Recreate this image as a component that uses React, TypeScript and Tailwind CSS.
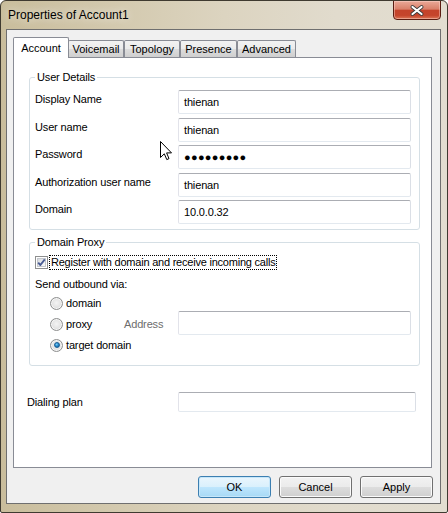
import React from "react";

const FONT = "font-['Liberation_Sans',Arial,sans-serif]";

function TextInput({ value, w = "w-[233px]", h = "h-[24px]" }: { value?: React.ReactNode; w?: string; h?: string }) {
  return (
    <div
      className={`${w} ${h} shrink-0 rounded-[2px] border border-[#e3e9ef] border-t-[#abadb3] border-l-[#e2e3ea] border-r-[#dbdfe6] bg-white flex items-center pl-[5px] text-[11px] leading-[14px] text-black`}
    >
      {value}
    </div>
  );
}

function Group({ title, className = "", children }: { title: string; className?: string; children: React.ReactNode }) {
  return (
    <div className={`relative rounded-[3px] border border-[#d5dfe5] ${className}`}>
      <span className="absolute left-[5px] top-[-8px] bg-white px-[2px] text-[11px] leading-[14px] text-black">{title}</span>
      {children}
    </div>
  );
}

function Radio({ checked }: { checked?: boolean }) {
  return (
    <div className="w-[13px] h-[13px] shrink-0 rounded-full border border-[#8e8f8f] bg-[radial-gradient(circle_at_50%_45%,#f4f4f4_0%,#e6e6e6_45%,#cfcfcf_100%)] flex items-center justify-center shadow-[inset_0_0_0_1px_#f6f6f6]">
      {checked && (
        <div className="w-[6px] h-[6px] rounded-full bg-[radial-gradient(circle_at_40%_35%,#7fd0f8_0%,#2a8fd0_45%,#0b4f8a_100%)] border border-[#1b5d93]" />
      )}
    </div>
  );
}

function Checkbox() {
  return (
    <div className="w-[13px] h-[13px] shrink-0 border border-[#8e8f8f] bg-white p-[1px]">
      <div className="w-full h-full border border-[#c4c7cc] bg-[linear-gradient(135deg,#d6d9de_0%,#eef0f2_60%,#f8f8f9_100%)] relative">
        <svg viewBox="0 0 9 9" className="absolute left-[-1px] top-[-1px] w-[9px] h-[9px]">
          <path d="M1.2 4.6 L3.4 7 L7.8 1.4" fill="none" stroke="#4a5c94" strokeWidth="1.9" strokeLinejoin="round" />
        </svg>
      </div>
    </div>
  );
}

function Button({ label, def }: { label: string; def?: boolean }) {
  const cls = def
    ? "border-[#3c7fb1] bg-[linear-gradient(180deg,#eaf6fd_0%,#d9f0fc_50%,#bee6fd_50%,#a7d9f5_100%)] shadow-[inset_0_0_0_1px_#c6e7fa]"
    : "border-[#707070] bg-[linear-gradient(180deg,#f2f2f2_0%,#ebebeb_50%,#dddddd_50%,#cfcfcf_100%)] shadow-[inset_0_0_0_1px_#fbfbfb]";
  return (
    <div className={`w-[73px] h-[22px] rounded-[3px] border ${cls} flex items-center justify-center text-[11px] text-black`}>
      {label}
    </div>
  );
}

export default function App() {
  const tabs = [
    { t: "Voicemail", w: "w-[56px]", extra: "ml-[-1px]" },
    { t: "Topology", w: "w-[56px]", extra: "" },
    { t: "Presence", w: "w-[57px]", extra: "" },
    { t: "Advanced", w: "w-[59px]", extra: "" },
  ];
  return (
    <div
      className={`${FONT} relative w-[448px] h-[513px] rounded-t-[6px] rounded-b-[2px] border border-[#3f3a30] bg-[linear-gradient(90deg,#c9bd9c_0%,#d3c9ae_25%,#dcd4c0_50%,#e1dbcd_75%,#e2ddd0_100%)] flex flex-col pl-[5px] pr-[6px] pb-[8px] overflow-hidden`}
    >
      {/* Title bar */}
      <div className="h-[28px] shrink-0 flex items-center pl-[2px] relative">
        <span className="text-[12px] text-black [text-shadow:0_0_8px_rgba(255,255,255,0.9)]">Properties of Account1</span>
        <div className="absolute right-[0px] top-[-1px] w-[48px] h-[20px] rounded-b-[4px] border border-[#5a1d12] bg-[linear-gradient(180deg,#eaa998_0%,#d9806a_45%,#c4432b_52%,#c5452c_80%,#dc7657_100%)] shadow-[inset_0_0_0_1px_rgba(255,220,210,0.45)] flex items-center justify-center">
          <svg viewBox="0 0 14 11" className="w-[14px] h-[11px]">
            <path d="M2.5 2 L11.5 9 M11.5 2 L2.5 9" stroke="#3a3a3a" strokeWidth="3.8" strokeLinecap="round" />
            <path d="M2.5 2 L11.5 9 M11.5 2 L2.5 9" stroke="#ffffff" strokeWidth="2.2" strokeLinecap="round" />
          </svg>
        </div>
      </div>

      {/* Client area */}
      <div className="flex-1 border border-[#6f6f6f] bg-[#f0f0f0] flex flex-col pl-[6px] pt-[7px]">
        {/* Tabs */}
        <div className="h-[20px] flex items-end">
          <div className="relative z-10 w-[56px] h-[21px] mb-[-1px] border border-b-0 border-[#898c95] bg-white rounded-t-[2px] flex items-start justify-center pt-[3px] text-[11px] leading-[14px] text-black">
            Account
          </div>
          {tabs.map((tb) => (
            <div
              key={tb.t}
              className={`${tb.w} ${tb.extra} h-[17px] border border-b-0 border-[#898c95] rounded-t-[2px] bg-[linear-gradient(180deg,#f2f2f2_0%,#ebebeb_50%,#dddddd_50%,#cfcfcf_100%)] flex items-center justify-center text-[11px] leading-[14px] text-black`}
            >
              {tb.t}
            </div>
          ))}
        </div>

        {/* Panel */}
        <div className="w-[419px] h-[411px] border border-[#898c95] bg-white flex flex-col tracking-[-0.15px]">
          <Group title="User Details" className="mt-[19px] ml-[15px] w-[391px] pt-[12px] pl-[5px] pb-[5px]">
            {[
              { l: "Display Name", v: "thienan", mt: "" },
              { l: "User name", v: "thienan", mt: "mt-[4px]" },
              {
                l: "Password",
                v: <span className="tracking-[0.3px] text-[11px]">●●●●●●●●●</span>,
                mt: "mt-[3px]",
              },
              { l: "Authorization user name", v: "thienan", mt: "mt-[4px]" },
              { l: "Domain", v: "10.0.0.32", mt: "mt-[3px]" },
            ].map((r) => (
              <div key={r.l} className={`flex items-start h-[24px] ${r.mt}`}>
                <div className="w-[143px] pt-[2px] text-[11px] leading-[14px] text-black">{r.l}</div>
                <TextInput value={r.v} />
              </div>
            ))}
          </Group>

          <Group title="Domain Proxy" className="mt-[12px] ml-[15px] w-[391px] pt-[12px] pb-[13px]">
            <div className="flex items-center h-[15px] pl-[5px]">
              <Checkbox />
              <span className="ml-[1px] h-[15px] border border-dotted border-black px-[1px] text-[11px] leading-[13px] text-black tracking-[-0.22px]">
                Register with domain and receive incoming calls
              </span>
            </div>
            <div className="mt-[7px] pl-[5px] text-[11px] leading-[14px] text-black">Send outbound via:</div>
            <div className="mt-[5px] h-[14px] pl-[20px] flex items-center">
              <Radio />
              <span className="ml-[3px] text-[11px] leading-[14px] text-black">domain</span>
            </div>
            <div className="mt-[1px] h-[24px] pl-[20px] flex items-start">
              <div className="w-[74px] mt-[6px] h-[14px] flex items-center">
                <Radio />
                <span className="ml-[3px] text-[11px] leading-[14px] text-black">proxy</span>
              </div>
              <div className="w-[54px] mt-[6px] text-[11px] leading-[14px] text-[#6d6d6d]">Address</div>
              <TextInput />
            </div>
            <div className="mt-[3px] h-[14px] pl-[20px] flex items-center">
              <Radio checked />
              <span className="ml-[3px] text-[11px] leading-[14px] text-black">target domain</span>
            </div>
          </Group>

          <div className="mt-[26px] h-[20px] pl-[13px] flex items-center">
            <div className="w-[151px] text-[11px] leading-[14px] text-black">Dialing plan</div>
            <TextInput w="w-[238px]" h="h-[20px]" />
          </div>
        </div>

        {/* Buttons */}
        <div className="mt-[8px] flex justify-end gap-[8px] pr-[7px]">
          <Button label="OK" def />
          <Button label="Cancel" />
          <Button label="Apply" />
        </div>
      </div>

      {/* Mouse cursor */}
      <svg className="absolute left-[159px] top-[140px] w-[13px] h-[20px] z-20" viewBox="0 0 13 20">
        <path d="M0.5 0.5 L0.5 16.5 L4.3 12.8 L6.8 18.6 L9 17.6 L6.6 11.9 L11.5 11.9 Z" fill="#ffffff" stroke="#000000" strokeWidth="1" strokeLinejoin="miter" />
      </svg>
    </div>
  );
}
